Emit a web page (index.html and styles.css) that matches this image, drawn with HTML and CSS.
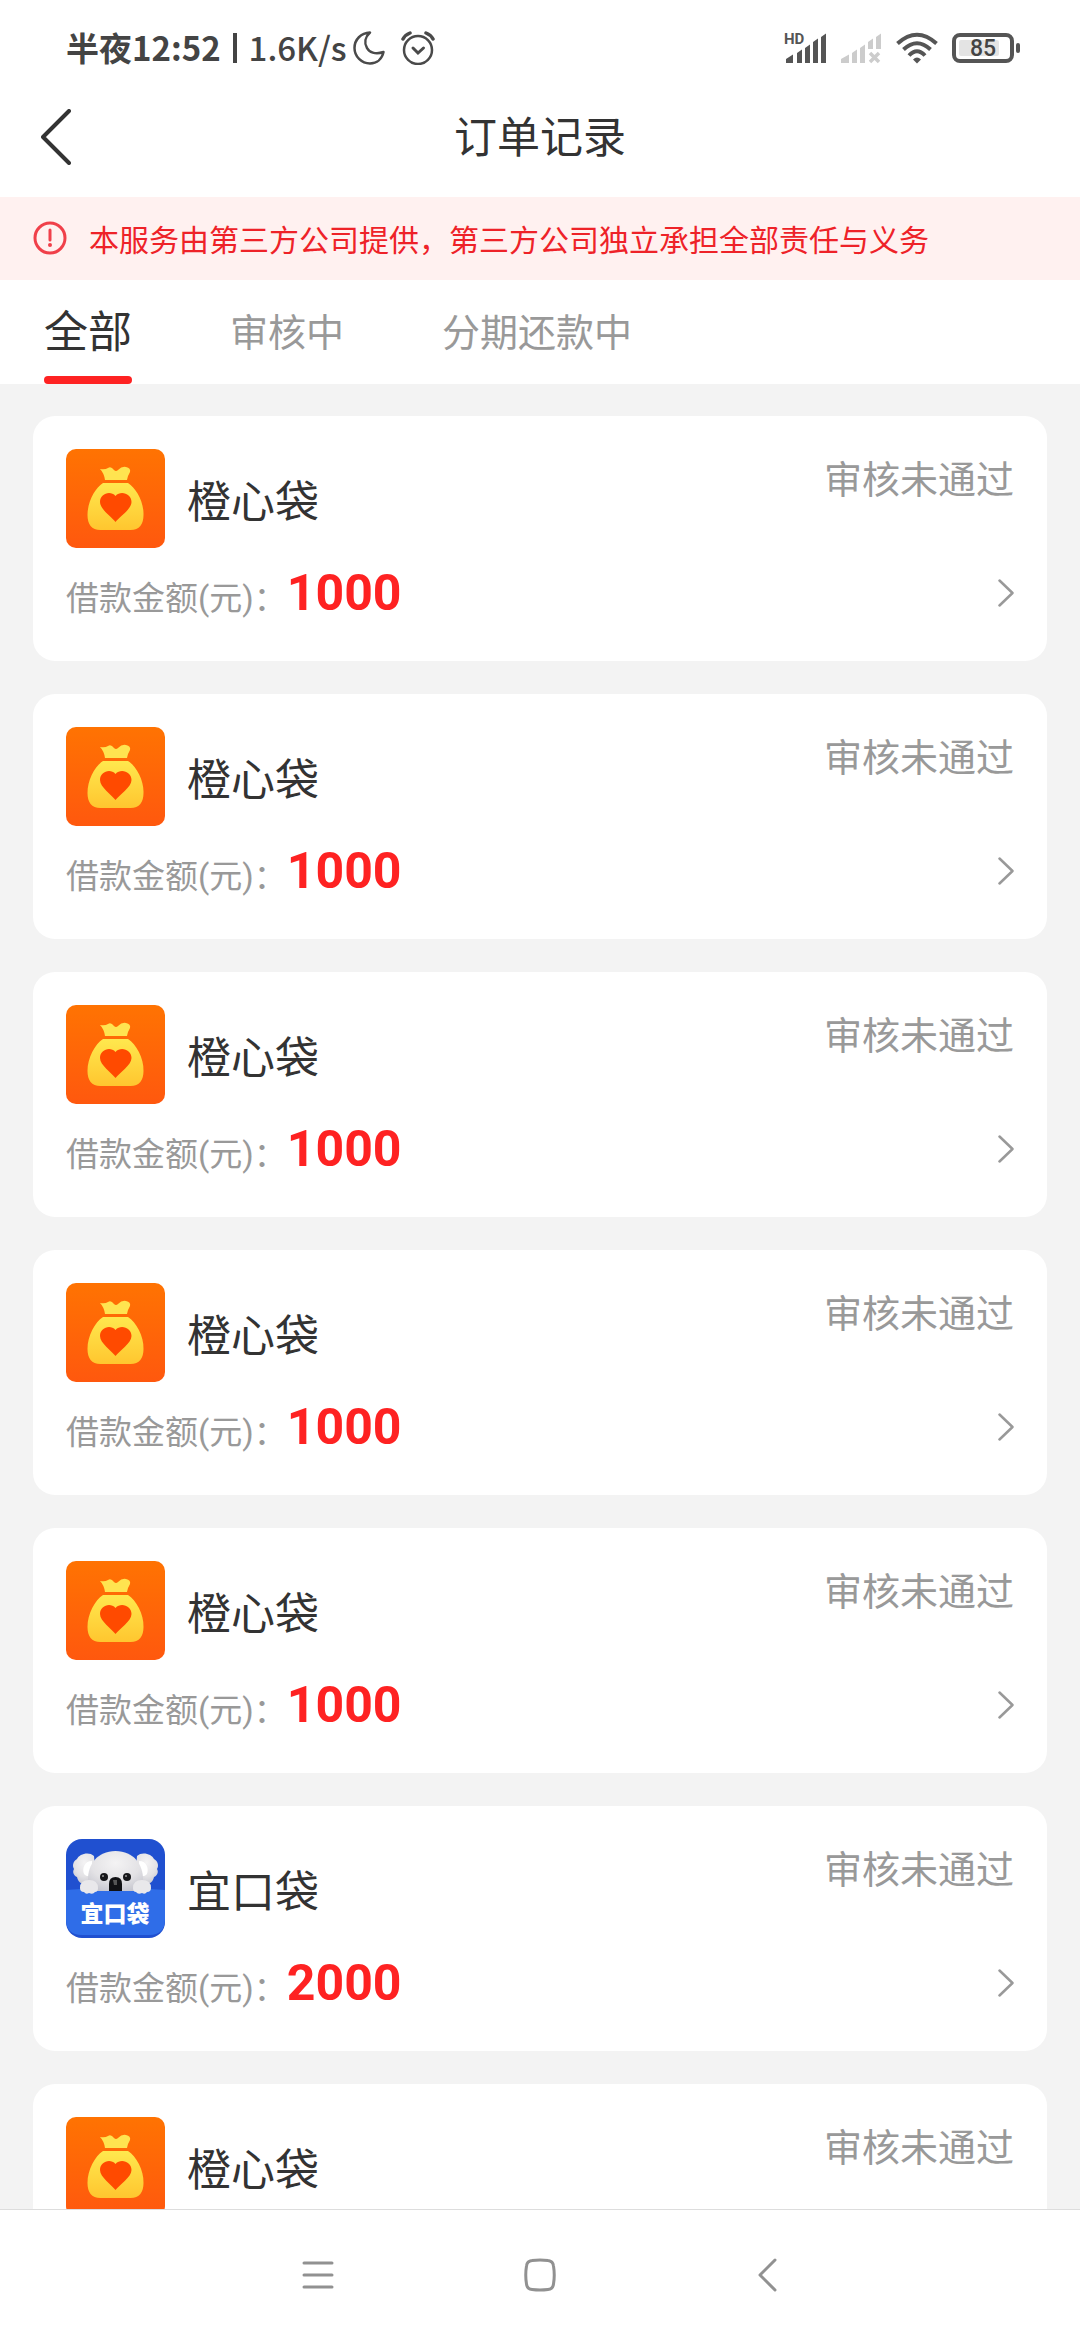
FILE: index.html
```html
<!DOCTYPE html>
<html lang="zh-CN">
<head>
<meta charset="utf-8">
<meta name="viewport" content="width=device-width, initial-scale=1">
<title>订单记录</title>
<link rel="stylesheet" href="styles.css">
</head>
<body>
<svg class="defs" width="0" height="0" aria-hidden="true">
  <defs>
    <linearGradient id="orange" x1="0" y1="0" x2="0" y2="1"><stop offset="0" stop-color="#ff7302"/><stop offset="1" stop-color="#ff580e"/></linearGradient>
    <linearGradient id="gold" x1="0" y1="0" x2="0" y2="1"><stop offset="0" stop-color="#ffe84e"/><stop offset="1" stop-color="#ffc62f"/></linearGradient>
    <radialGradient id="fur" cx=".5" cy=".3" r=".75"><stop offset="0" stop-color="#f4f3f4"/><stop offset=".6" stop-color="#e3e2e5"/><stop offset="1" stop-color="#c6c6cf"/></radialGradient>
  </defs>
  <symbol id="bag" viewBox="0 0 99 99">
    <rect width="99" height="99" rx="10" fill="url(#orange)"/>
    <path fill="#ffe450" d="M34 20q5 1 8-1q3-2 6 2q2 2 4 0q4-4 8-3q5 1 4 5q-2 3-3 8h-22q-1-7-5-11z"/>
    <path fill="url(#gold)" d="M37 34h25c8 5 16 19 15.500 32c0 9-4 15-13 15h-30c-9 0-13-6-13-15c0-13 7.500-27 15.500-32z"/>
    <path fill="#ff4a00" d="M49.500 73c-4-5-15.500-13-15.500-20c0-8 10-12 15.500-6c5.500-6 16-2 16 6c0 7-12 15-16 20z"/>
  </symbol>
  <symbol id="chevron" viewBox="0 0 16 28"><path d="M1.500 1.500L14.500 14L1.500 26.500" fill="none" stroke="#999" stroke-width="2.500" stroke-linecap="round" stroke-linejoin="round"/></symbol>
</svg>

<div class="app">
  <header>
    <div class="statusbar">
      <div class="status-left">
        <span class="clock">半夜12:52</span><span class="divider"></span><span class="speed">1.6K/s</span>
        <svg class="moon" width="32" height="34" viewBox="0 0 32 34" fill="none" stroke="#4a4a4a" stroke-width="2.500" stroke-linejoin="round"><path d="M17 1.500C8 2 1.500 8.500 1.500 17S8.500 32.500 17 32.500C24 32.500 29 28 30.500 21C22 24 16 21 14 17C11 12 12 6 17 1.500z"/></svg>
        <svg class="alarm" width="34" height="34" viewBox="0 0 34 34" fill="none" stroke="#4a4a4a" stroke-width="2.500" stroke-linecap="round"><circle cx="17" cy="19" r="14"/><path stroke-width="3" d="M12 17l5 5l5.500-5"/><path stroke-width="3.500" d="M2 8q2-4 7-6M25 2q5 2 7 6"/></svg>
      </div>
      <div class="status-right">
        <svg width="42" height="32" viewBox="0 0 42 32" fill="#555"><text class="hd-text" x="0" y="12">HD</text><path d="M2 27l7-4.500V31H2zM13 21l5-3.500V31h-5zM21 16l5-3.500V31h-5zM29 10l5-3.500V31h-5zM37 5l5-3.500V31h-5z"/></svg>
        <svg width="42" height="32" viewBox="0 0 42 32" fill="#ccc"><path d="M1 27l8-4.500V31H1zM12 21l5-3.500V31h-5zM20 16l5-3.500V31h-5zM28 10l5-3.500V17h-5zM36 5l5-3.500V17h-5z"/><path d="M30 21l9 9M39 21l-9 9" stroke="#ccc" stroke-width="3.500"/></svg>
        <svg width="42" height="32" viewBox="0 0 42 32" fill="none" stroke="#555" stroke-width="4"><path d="M1.500 11.500Q21-6 40.500 11.500M7.500 17.500Q21 5 34.500 17.500M13 23.500Q21 15 29 23.500"/><path stroke="none" fill="#555" d="M17 27.500q4-4 8 0L21 31.500z"/></svg>
        <svg width="68" height="32" viewBox="0 0 68 32"><rect x="7" y="8" width="40" height="16" rx="2" fill="#e4e4e4"/><rect x="2" y="3" width="58" height="26" rx="6" fill="none" stroke="#555" stroke-width="4"/><rect x="64" y="11" width="4" height="10" rx="2" fill="#555"/><text class="battery-text" x="31" y="24" text-anchor="middle">85</text></svg>
      </div>
    </div>
    <div class="titlebar">
      <button class="back" type="button" aria-label="返回"><svg width="30" height="56" viewBox="0 0 30 56"><path d="M28 2L2 28L28 54" fill="none" stroke="#333" stroke-width="4" stroke-linecap="round" stroke-linejoin="round"/></svg></button>
      <h1>订单记录</h1>
    </div>
    <div class="notice">
      <svg width="34" height="34" viewBox="0 0 34 34"><circle cx="17" cy="17" r="15" fill="none" stroke="#f0404a" stroke-width="3"/><path d="M17 9v10" stroke="#f0404a" stroke-width="3" stroke-linecap="round"/><circle cx="17" cy="24" r="2" fill="#f0404a"/></svg>
      <span>本服务由第三方公司提供，第三方公司独立承担全部责任与义务</span>
    </div>
    <nav class="tabs">
      <button class="tab active" type="button">全部</button>
      <button class="tab" type="button">审核中</button>
      <button class="tab" type="button">分期还款中</button>
    </nav>
  </header>

  <main class="orders">
    <a class="card" href="#"><div class="top"><svg class="logo"><use href="#bag"/></svg><h2>橙心袋</h2><span class="state">审核未通过</span></div><div class="bottom"><span class="label">借款金额(元)：</span><strong>1000</strong><svg class="chevron"><use href="#chevron"/></svg></div></a>
    <a class="card" href="#"><div class="top"><svg class="logo"><use href="#bag"/></svg><h2>橙心袋</h2><span class="state">审核未通过</span></div><div class="bottom"><span class="label">借款金额(元)：</span><strong>1000</strong><svg class="chevron"><use href="#chevron"/></svg></div></a>
    <a class="card" href="#"><div class="top"><svg class="logo"><use href="#bag"/></svg><h2>橙心袋</h2><span class="state">审核未通过</span></div><div class="bottom"><span class="label">借款金额(元)：</span><strong>1000</strong><svg class="chevron"><use href="#chevron"/></svg></div></a>
    <a class="card" href="#"><div class="top"><svg class="logo"><use href="#bag"/></svg><h2>橙心袋</h2><span class="state">审核未通过</span></div><div class="bottom"><span class="label">借款金额(元)：</span><strong>1000</strong><svg class="chevron"><use href="#chevron"/></svg></div></a>
    <a class="card" href="#"><div class="top"><svg class="logo"><use href="#bag"/></svg><h2>橙心袋</h2><span class="state">审核未通过</span></div><div class="bottom"><span class="label">借款金额(元)：</span><strong>1000</strong><svg class="chevron"><use href="#chevron"/></svg></div></a>
    <a class="card" href="#">
      <div class="top">
        <svg class="logo" viewBox="0 0 99 99">
          <rect width="99" height="99" rx="16" fill="#2050d0"/>
          <path fill="#2f6de8" d="M0 51q49-5 99 0v29q0 16-16 16H16Q0 96 0 80z"/>
          <g fill="url(#fur)">
            <path d="M28 17c-5-5-15-2-17 3c-4 2-5 7-3 10c-2 3 0 7 3 8c1 5 5 8 9 7l10-5z"/>
            <path d="M71 17c5-5 15-2 17 3c4 2 5 7 3 10c2 3 0 7-3 8c-1 5-5 8-9 7l-10-5z"/>
          </g>
          <path fill="#fff" d="M26 22c-8 0-10 8-8 13c2 3 6 2 8 2zM73 22c8 0 10 8 8 13c-2 3-6 2-8 2z"/>
          <path fill="url(#fur)" d="M49.500 12C31 12 22 26 22 40q0 8 7 12h41q7-4 7-12C77 26 68 12 49.500 12z"/>
          <circle cx="38" cy="38" r="4" fill="#17171a"/><circle cx="61" cy="38" r="4" fill="#17171a"/>
          <circle cx="37" cy="37" r="1" fill="#999"/><circle cx="60" cy="37" r="1" fill="#999"/>
          <path fill="#111114" d="M43 52v-7q0-7 6.500-7t6.500 7v7z"/><path d="M47 41h4v5h-3z" fill="#555"/>
          <path fill="#e9e8eb" d="M14 49q0-8 9-8t9 8q0 4-3 4q-2 3-6 1q-3 2-5-1q-4 0-4-4zM67 49q0-8 9-8t9 8q0 4-4 4q-2 3-5 1q-4 2-6-1q-3 0-3-4z"/>
          <text class="logo-text" x="49" y="83" text-anchor="middle">宜口袋</text>
        </svg>
        <h2>宜口袋</h2><span class="state">审核未通过</span>
      </div>
      <div class="bottom"><span class="label">借款金额(元)：</span><strong>2000</strong><svg class="chevron"><use href="#chevron"/></svg></div>
    </a>
    <a class="card" href="#"><div class="top"><svg class="logo"><use href="#bag"/></svg><h2>橙心袋</h2><span class="state">审核未通过</span></div></a>
  </main>

  <nav class="sysnav">
    <button type="button" aria-label="最近任务"><svg width="32" height="34" viewBox="0 0 32 34" stroke="#919191" stroke-width="3" stroke-linecap="round"><path d="M2 5h28M2 17h28M2 29h28"/></svg></button>
    <button type="button" aria-label="主屏幕"><svg width="32" height="34" viewBox="0 0 32 34"><path d="M8 2.500Q16 1.500 24 2.500Q29 3 29.500 8Q31 17 29.500 26Q29 31 24 31.500Q16 32.500 8 31.500Q3 31 2.500 26Q1 17 2.500 8Q3 3 8 2.500z" fill="none" stroke="#919191" stroke-width="3"/></svg></button>
    <button type="button" aria-label="返回上一页"><svg width="20" height="34" viewBox="0 0 20 34"><path d="M17 2L2 17L17 32" fill="none" stroke="#919191" stroke-width="3" stroke-linecap="round" stroke-linejoin="round"/></svg></button>
  </nav>
</div>
</body>
</html>
```
FILE: styles.css
```css
* { box-sizing: border-box; }
body {
  margin: 0;
  background: #fff;
  color: #333;
  font-family: Roboto, "Noto Sans CJK SC", sans-serif;
}
button { border: 0; padding: 0; background: none; font: inherit; color: inherit; }
svg { display: block; flex: none; }
h1, h2 { margin: 0; font-weight: 400; }
.defs { position: absolute; }

.app { display: flex; flex-direction: column; height: 100vh; }
header { flex: none; }

/* Phone status bar */
.statusbar {
  display: flex;
  align-items: center;
  justify-content: space-between;
  height: 96px;
  padding: 0 60px 0 66px;
  color: #444;
}
.status-left { display: flex; align-items: center; }
.clock, .speed { padding-bottom: 2px; font-family: "Noto Sans CJK SC", sans-serif; font-size: 33px; line-height: 48px; }
.clock { font-weight: 700; }
.speed { font-weight: 500; }
.divider { width: 4px; height: 30px; margin: 0 12px; background: #444; }
.moon { margin: 0 16px 0 6px; }
.status-right { display: flex; align-items: center; gap: 14px; }
.hd-text { font: 700 15px Roboto, sans-serif; }
.battery-text { font: 500 23px Roboto, sans-serif; fill: #444; }

/* Page title */
.titlebar {
  display: grid;
  grid-template-columns: 1fr auto 1fr;
  align-items: center;
  height: 101px;
  padding: 0 41px 20px;
}
.back { justify-self: start; }
.titlebar h1 { padding-top: 2px; font-size: 43px; line-height: 64px; }

.notice {
  display: flex;
  align-items: center;
  gap: 22px;
  height: 83px;
  padding: 0 33px 2px;
  background: #fff1f0;
  color: #ee2228;
  font-size: 30px;
}

.tabs { display: flex; gap: 98px; height: 104px; padding: 0 44px; }
.tab { padding-bottom: 6px; color: #999; font-size: 38px; }
.tab.active { position: relative; color: #333; font-size: 44px; }
.tab.active::after {
  content: "";
  position: absolute;
  left: 0;
  right: 0;
  bottom: 0;
  height: 8px;
  border-radius: 4px;
  background: #fe2222;
}

/* Order list */
.orders {
  flex: 1;
  min-height: 0;
  overflow: hidden;
  display: flex;
  flex-direction: column;
  gap: 33px;
  padding: 32px 33px 0;
  background: #f3f3f3;
}
.card {
  flex: none;
  padding: 33px 33px 32px;
  border-radius: 22px;
  background: #fff;
  color: inherit;
  text-decoration: none;
}
.top { display: flex; align-items: center; gap: 22px; }
.logo { width: 99px; height: 99px; }
.logo-text { font: 900 23px "Noto Sans CJK SC", sans-serif; fill: #fff; }
.top h2 { padding-top: 8px; font-size: 44px; line-height: 64px; }
.state { align-self: flex-start; margin-left: auto; color: #999; font-size: 38px; line-height: 62px; }
.bottom { display: flex; align-items: baseline; height: 81px; padding-top: 8px; color: #999; line-height: 74px; }
.label { font-size: 33px; }
.bottom strong { color: #fe2222; font-size: 50px; font-weight: 700; }
.chevron { width: 16px; height: 28px; margin: auto 0 auto auto; }

/* System navigation */
.sysnav {
  flex: none;
  display: grid;
  grid-template-columns: 1fr auto 1fr;
  align-items: center;
  height: 131px;
  padding: 0 28%;
  border-top: 1px solid #ddd;
  background: #fff;
}
.sysnav button:first-child { justify-self: start; }
.sysnav button:last-child { justify-self: end; }
```
